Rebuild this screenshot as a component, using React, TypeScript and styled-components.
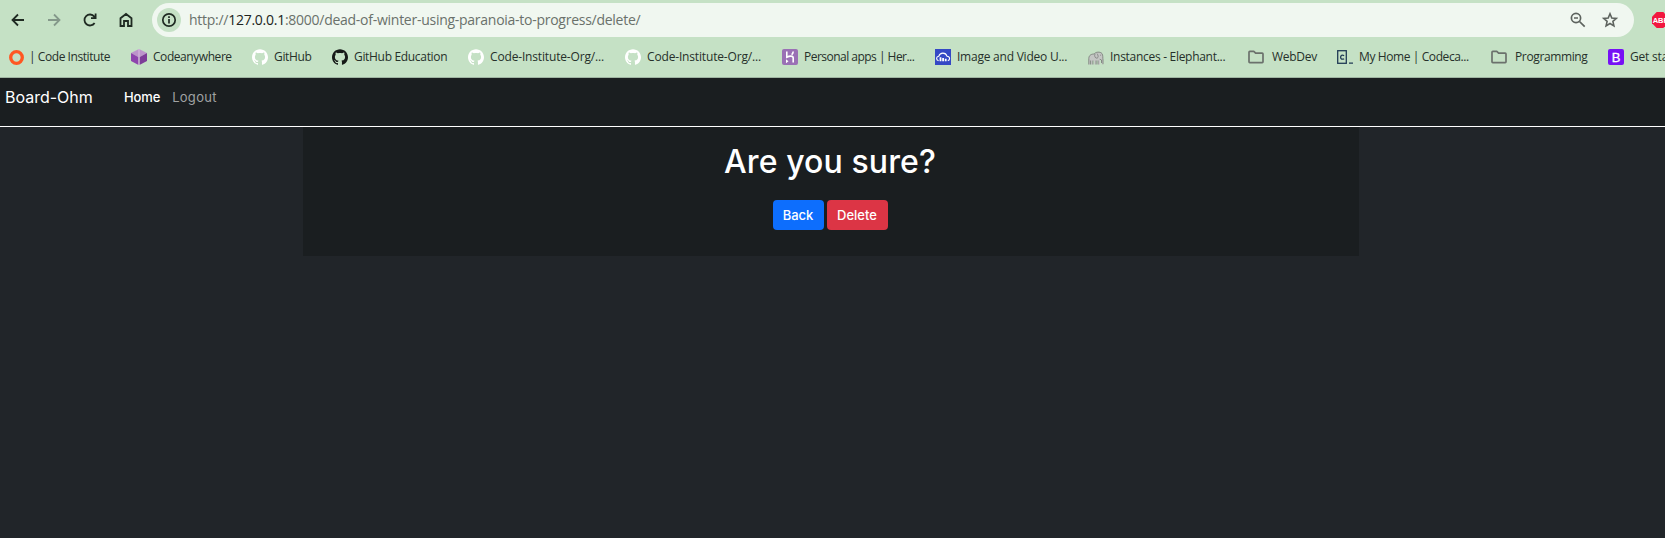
import React from "react";
import styled, { createGlobalStyle } from "styled-components";
import { SiGithub } from "react-icons/si";

const GlobalStyle = createGlobalStyle`
  * { box-sizing: border-box; }
  body { margin: 0; background: #212529; overflow: hidden; font-family: "Open Sans", "Noto Sans", sans-serif; }
`;

const Page = styled.div`
  width: 100%;
  height: 538px;
  overflow: hidden;
  background: #212529;
`;

const Toolbar = styled.div`
  height: 40px;
  display: flex;
  align-items: center;
  background: #c5e1c5;
  overflow: hidden;
`;

const NavIcons = styled.div`
  display: flex;
  flex: none;
  gap: 16px;
  width: 144px;
  margin-left: 8px;
`;

const ToolIcon = styled.svg<{ $color?: string }>`
  width: 20px;
  height: 20px;
  flex: none;
  fill: none;
  stroke: ${(p) => p.$color ?? "#1f2a22"};
  stroke-width: 1.8;
`;

const Omnibox = styled.div`
  flex: none;
  width: 1482px;
  height: 34px;
  border-radius: 17px;
  background: #f0f7f0;
  display: flex;
  align-items: center;
  padding: 0 14px 0 5px;
`;

const InfoChip = styled.div`
  width: 24px;
  height: 24px;
  border-radius: 50%;
  background: #c5e1c5;
  display: grid;
  place-items: center;
`;

const Address = styled.div`
  flex: 1;
  margin-left: 8px;
  font-size: 14px;
  line-height: 20px;
  white-space: nowrap;
  color: #6a716b;
  letter-spacing: -0.265px;
`;

const Host = styled.span`
  color: #202421;
`;

const OmniActions = styled.div`
  display: flex;
  gap: 12px;
`;

const BlockerBadge = styled.svg`
  flex: none;
  width: 16px;
  height: 16px;
  margin-left: 18px;
`;

const Bookmarks = styled.div`
  height: 38px;
  background: #c5e1c5;
  border-bottom: 1px solid #9fb5a1;
  display: flex;
  align-items: center;
  gap: 21px;
  padding: 0 0 3px 9px;
  overflow: hidden;
`;

const Bookmark = styled.div<{ $width: number; $gap?: number; $tracking: number }>`
  flex: none;
  display: flex;
  align-items: center;
  gap: ${(p) => p.$gap ?? 6}px;
  width: ${(p) => p.$width}px;
  font-size: 12px;
  line-height: 16px;
  white-space: nowrap;
  color: #26302a;
  letter-spacing: ${(p) => p.$tracking}px;
`;

const Favicon = styled.svg`
  width: 16px;
  height: 16px;
  flex: none;
`;

const SiteNav = styled.nav`
  height: 49px;
  background: #1a1e20;
  border-bottom: 1px solid #fff;
  display: flex;
  align-items: flex-start;
  padding: 7px 5px;
  font-family: Inter, sans-serif;
  font-size: 13px;
  line-height: 24px;
`;

const Brand = styled.span`
  width: 119px;
  font-size: 16px;
  color: #fff;
`;

const NavLink = styled.a<{ $active?: boolean }>`
  margin-right: 12px;
  font-weight: ${(p) => (p.$active ? 500 : 400)};
  letter-spacing: ${(p) => (p.$active ? -0.15 : 0.3)}px;
  color: ${(p) => (p.$active ? "#fff" : "#a0a2a3")};
`;

const Panel = styled.main`
  width: 1056px;
  height: 129px;
  margin-left: 303px;
  padding-right: 2px;
  background: #1a1e20;
  display: flex;
  flex-direction: column;
  align-items: center;
  font-family: Inter, sans-serif;
`;

const Title = styled.h1`
  margin: 16px 0 0;
  font-size: 32px;
  line-height: 38px;
  font-weight: 500;
  letter-spacing: 0.1px;
  color: #fff;
`;

const Actions = styled.div`
  display: flex;
  gap: 3px;
  margin-top: 19px;
`;

const Button = styled.button<{ $color: string; $width: number }>`
  width: ${(p) => p.$width}px;
  height: 30px;
  border: 0;
  border-radius: 4px;
  padding: 0;
  background: ${(p) => p.$color};
  color: #fff;
  font: 500 13px/30px Inter, sans-serif;
`;

const Github = ({ color }: { color: string }) => <Favicon as={SiGithub} color={color} />;

const Folder = () => (
  <Favicon viewBox="0 0 16 16" fill="none" stroke="#6b716c" strokeWidth="1.7" strokeLinejoin="round">
    <path d="M1 3.2Q1 2.4 1.8 2.4H5.8L7.6 4.2H14.2Q15 4.2 15 5V12.8Q15 13.6 14.2 13.6H1.8Q1 13.6 1 12.8Z" />
  </Favicon>
);

const Ring = () => (
  <Favicon viewBox="0 0 16 16" fill="none"><circle cx="7.5" cy="8.5" r="5.8" stroke="#ff5722" strokeWidth="3.3" /></Favicon>
);

const Cube = () => (
  <Favicon viewBox="0 0 16 16">
    <path d="M8 0 16 4 8 8.4 0 4Z" fill="#bd94cb" />
    <path d="M0 4 7.6 8.3V16L0 12Z" fill="#8e44ad" />
    <path d="M16 4 8.4 8.3V16L16 12Z" fill="#7d3c98" />
    <path d="M8 0V16" stroke="#d8bddf" strokeWidth="1" />
  </Favicon>
);

const Heroku = () => (
  <Favicon viewBox="0 0 16 16" fill="none" stroke="#fff" strokeWidth="1.6">
    <rect width="16" height="16" rx="2" fill="#9a70b5" stroke="none" />
    <path d="M4.8 2.4V8.2C7 7 11.2 6.2 11.2 9V13.6M11.2 2.4C11.2 3.8 10.5 4.8 9.7 5.7" />
    <path d="M4 10.2 6.5 12.2 4 14.2Z" fill="#fff" stroke="none" />
  </Favicon>
);

const Cloud = () => (
  <Favicon viewBox="0 0 16 16">
    <rect width="16" height="16" fill="#3448c5" />
    <path d="M3.6 11.8C.8 11 1 7.4 3.8 7.2 5 3.3 10.6 3 12 7.2 15.3 7.3 15.3 11 12.8 11.8" fill="none" stroke="#fff" strokeWidth="1.1" />
    <path d="M4.6 8.3h1.8v4H4.6zM7.2 9h1.8v3.3H7.2zM9.8 9.7h1.8v2.6H9.8z" fill="#fff" />
  </Favicon>
);

const Elephant = () => (
  <Favicon viewBox="0 0 16 16">
    <path d="M.8 15.5V9.5C1 6 3.4 5 6.2 5 7.4 2.8 12.4 2.4 14 4.6 15.2 6.5 14.6 8.7 15 11V15.2H13.8V11L12 10.4V15.5H10V11.8H8.3V15.5H6.4V11.8H4.6V15.5H2.9V11L2 15.5Z" fill="#c4c6c4" />
    <path d="M.8 15.5V9.5C1 6 3.4 5 6.2 5 7.4 2.8 12.4 2.4 14 4.6 15.2 6.5 14.6 8.7 15 11V15.2M2.6 15.5V11.5M4.9 15.5V11.5M8.1 15.5V11.5M10 15.5V11.5M13.5 14V11L11.7 10.2" fill="none" stroke="#747774" strokeWidth=".8" />
    <path d="M7 5C6 7 7.3 9.6 9.1 9.2 10.8 8.7 10.2 6 9.1 4.6M12.1 6.2h1" fill="none" stroke="#727572" strokeWidth=".7" />
  </Favicon>
);

const Codecademy = () => (
  <Favicon viewBox="0 0 16 16" fill="none" stroke="#203b55" strokeWidth="1.3">
    <rect x=".7" y="1.7" width="8.6" height="12.6" />
    <path d="M7.1 6.7C5.2 5.5 3.6 6.4 3.6 8.2S5.3 10.8 7.1 9.7M12 14.2h4" />
  </Favicon>
);

const Bootstrap = () => (
  <Favicon viewBox="0 0 16 16">
    <rect width="16" height="16" rx="2" fill="#7610f5" />
    <text x="8" y="12.5" textAnchor="middle" fontFamily="Liberation Sans, sans-serif" fontSize="13" stroke="#fff" strokeWidth=".3" fill="#fff">B</text>
  </Favicon>
);

const bookmarks = [
  { text: "| Code Institute", width: 101, gap: 4, tracking: -0.44, icon: <Ring /> },
  { text: "Codeanywhere", width: 100, tracking: -0.44, icon: <Cube /> },
  { text: "GitHub", width: 59, tracking: -0.33, icon: <Github color="#fff" /> },
  { text: "GitHub Education", width: 115, tracking: -0.32, icon: <Github color="#161a18" /> },
  { text: "Code-Institute-Org/...", width: 136, tracking: -0.16, icon: <Github color="#fff" /> },
  { text: "Code-Institute-Org/...", width: 136, tracking: -0.16, icon: <Github color="#fff" /> },
  { text: "Personal apps | Her...", width: 132, tracking: -0.52, icon: <Heroku /> },
  { text: "Image and Video U...", width: 132, tracking: -0.23, icon: <Cloud /> },
  { text: "Instances - Elephant...", width: 139, tracking: -0.29, icon: <Elephant /> },
  { text: "WebDev", width: 68, gap: 8, tracking: -0.28, icon: <Folder /> },
  { text: "My Home | Codeca...", width: 133, tracking: -0.4, icon: <Codecademy /> },
  { text: "Programming", width: 96, gap: 8, tracking: -0.37, icon: <Folder /> },
  { text: "Get started", width: 90, tracking: -0.2, icon: <Bootstrap /> },
];

export default function App() {
  return (
    <Page>
      <GlobalStyle />
      <Toolbar>
        <NavIcons>
          <ToolIcon viewBox="0 0 20 20"><path d="M16 10H5M10 4.5 4.5 10 10 15.5" /></ToolIcon>
          <ToolIcon viewBox="0 0 20 20" $color="#84988a"><path d="M4 10H15M10 4.5 15.5 10 10 15.5" /></ToolIcon>
          <ToolIcon viewBox="0 0 20 20"><path d="M14.6 13A5.5 5.5 0 1 1 14.3 6.6L15.5 8M15.6 3.6V8.2H11" /></ToolIcon>
          <ToolIcon viewBox="0 0 20 20"><path d="M4.5 16V8.2L10 4 15.5 8.2V16H12V11H8V16Z" /></ToolIcon>
        </NavIcons>
        <Omnibox>
          <InfoChip>
            <ToolIcon viewBox="0 0 20 20"><circle cx="10" cy="10" r="6.2" strokeWidth="1.7" /><path d="M10 9V13.5M10 6.3V8" strokeWidth="1.7" /></ToolIcon>
          </InfoChip>
          <Address>http://<Host>127.0.0.1</Host>:8000/dead-of-winter-using-paranoia-to-progress/delete/</Address>
          <OmniActions>
            <ToolIcon viewBox="0 0 20 20" $color="#5d635e"><circle cx="8" cy="8" r="4.6" strokeWidth="1.7" /><path d="M11.5 11.5 16.7 16.7M6 8h4" strokeWidth="1.7" /></ToolIcon>
            <ToolIcon viewBox="0 0 20 20" $color="#5d635e"><path d="M10 3.8 11.8 8 16.3 8.4 12.9 11.4 13.9 15.9 10 13.5 6.1 15.9 7.1 11.4 3.7 8.4 8.2 8Z" strokeWidth="1.6" /></ToolIcon>
          </OmniActions>
        </Omnibox>
        <BlockerBadge viewBox="0 0 16 16">
          <path d="M4.7 0h6.6L16 4.7v6.6L11.3 16H4.7L0 11.3V4.7Z" fill="#f2173f" />
          <text x=".7" y="11" fontFamily="Liberation Sans, sans-serif" fontWeight="700" fontSize="7.5" fill="#fff">ABP</text>
        </BlockerBadge>
      </Toolbar>
      <Bookmarks>
        {bookmarks.map((b, i) => (
          <Bookmark key={i} $width={b.width} $gap={b.gap} $tracking={b.tracking}>{b.icon}<span>{b.text}</span></Bookmark>
        ))}
      </Bookmarks>
      <SiteNav>
        <Brand>Board-Ohm</Brand>
        <NavLink $active>Home</NavLink>
        <NavLink>Logout</NavLink>
      </SiteNav>
      <Panel>
        <Title>Are you sure?</Title>
        <Actions>
          <Button $color="#0d6efd" $width={51}>Back</Button>
          <Button $color="#dc3545" $width={61}>Delete</Button>
        </Actions>
      </Panel>
    </Page>
  );
}
